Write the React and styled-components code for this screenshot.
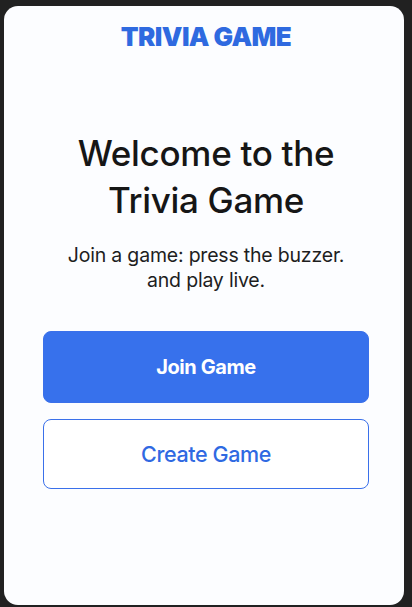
import React from 'react';
import styled, { createGlobalStyle } from 'styled-components';

const GlobalStyle = createGlobalStyle`
  html, body {
    margin: 0;
    padding: 0;
    background: #212121;
  }
  * {
    box-sizing: border-box;
  }
`;

const Screen = styled.div`
  width: 412px;
  height: 607px;
  padding: 6px 8px 2px 4px;
  background: #212121;
  display: flex;
`;

const Card = styled.main`
  flex: 1;
  background: #fcfdff;
  border-radius: 14px;
  display: flex;
  flex-direction: column;
  align-items: center;
  padding: 13px 35px 0 39px;
  font-family: Inter, "Noto Sans", sans-serif;
`;

const Logo = styled.div`
  font-size: 26px;
  font-weight: 900;
  letter-spacing: -0.6px;
  color: #2f6ae0;
  line-height: 36px;
`;

const Heading = styled.h1`
  margin: 75px 0 0;
  font-size: 35px;
  font-weight: 500;
  line-height: 47px;
  letter-spacing: -0.3px;
  color: #161616;
  text-align: center;
`;

const Tagline = styled.p`
  margin: 19px 0 0;
  font-size: 19.5px;
  line-height: 25px;
  color: #1e1e1e;
  text-align: center;
  letter-spacing: -0.2px;
`;

const Actions = styled.div`
  width: 100%;
  margin-top: 38px;
  display: flex;
  flex-direction: column;
  gap: 16px;
`;

const Button = styled.button`
  width: 100%;
  height: ${p => (p.$primary ? '72px' : '70px')};
  border-radius: 8px;
  font-family: Inter, "Noto Sans", sans-serif;
  font-size: ${p => (p.$primary ? '20px' : '21.5px')};
  font-weight: ${p => (p.$primary ? 700 : 500)};
  letter-spacing: -0.4px;
  cursor: pointer;
  border: 1px solid #3a70ea;
  background: ${p => (p.$primary ? '#3771ec' : '#ffffff')};
  color: ${p => (p.$primary ? '#ffffff' : '#2f69e2')};
`;

export default function App() {
  return (
    <>
      <GlobalStyle />
      <Screen>
        <Card>
          <Logo>TRIVIA GAME</Logo>
          <Heading>
            Welcome to the
            <br />
            Trivia Game
          </Heading>
          <Tagline>
            Join a game: press the buzzer.
            <br />
            and play live.
          </Tagline>
          <Actions>
            <Button $primary>Join Game</Button>
            <Button>Create Game</Button>
          </Actions>
        </Card>
      </Screen>
    </>
  );
}
